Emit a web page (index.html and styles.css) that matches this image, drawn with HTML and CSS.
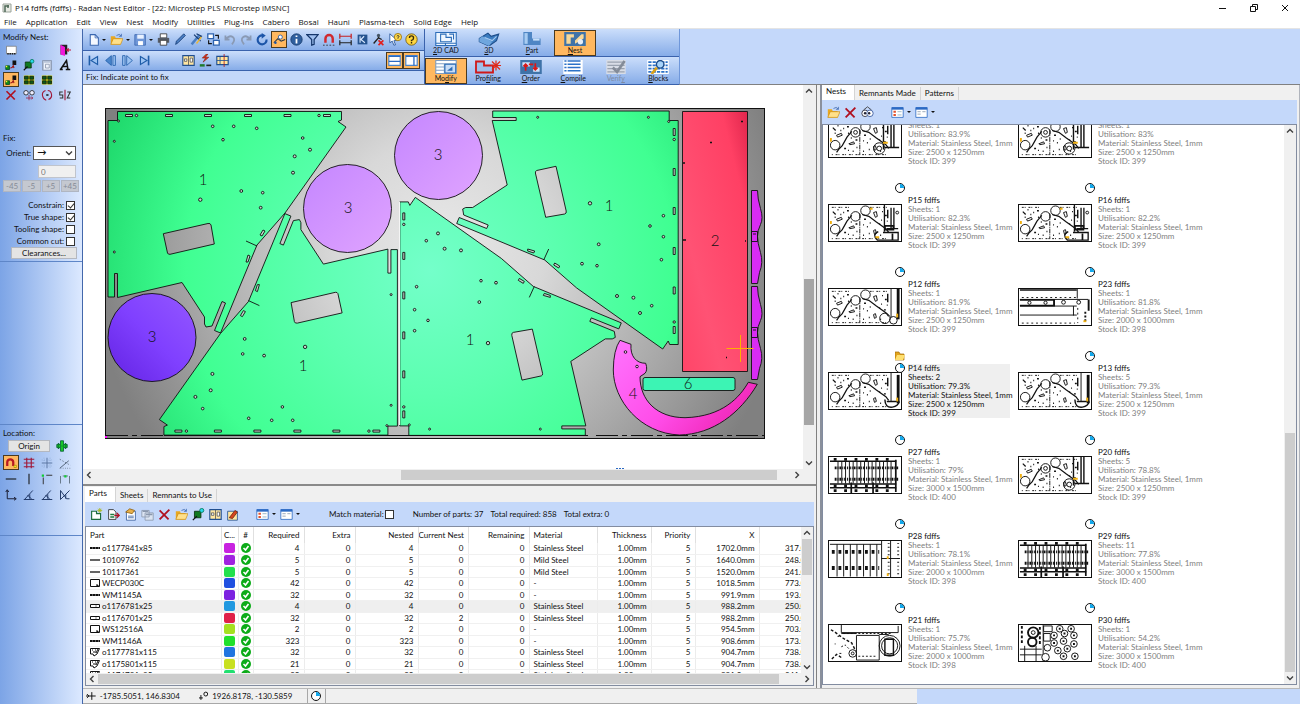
FILE: index.html
```html
<!DOCTYPE html>
<html lang="en">
  <head>
    <meta charset="UTF-8" />
    <meta name="viewport" content="width=device-width, initial-scale=1.0" />
    <title>P14 fdffs (fdffs) - Radan Nest Editor</title>
    <link rel="stylesheet" href="styles.css">
  </head>
  <body>

    <!-- icon set -->
    <svg class="defs" aria-hidden="true">
      <symbol id="new" viewBox="0 0 16 16"><path d="M4 2h6l4 4v9H4z" fill="#f4f8ff" stroke="#3b68b0" stroke-width="1.3"/><path d="M10 2v4h4" fill="none" stroke="#3b68b0"/></symbol>
      <symbol id="open" viewBox="0 0 16 16"><path d="M1 14V4h5l1 2h6v8z" fill="#e9a820"/><path d="M1 14l3-7h12l-3 7z" fill="#ffe08a" stroke="#c98a10" stroke-width=".8"/><path d="M8 3q4-3 6 1M14 1v3h-3" fill="none" stroke="#3b68b0"/></symbol>
      <symbol id="save" viewBox="0 0 16 16"><path d="M1 2h13v13H1z" fill="#6f97d8" stroke="#3b68b0"/><path d="M4 2h8v5H4z" fill="#e8f1ff"/><path d="M5 10h6v5H5z" fill="#fff"/></symbol>
      <symbol id="print" viewBox="0 0 16 16"><path d="M4 1h8v5H4z" fill="#fff" stroke="#333"/><path d="M1 6h14v6H1z" fill="#555c68"/><path d="M4 9h8v6H4z" fill="#fff" stroke="#333"/></symbol>
      <symbol id="pen" viewBox="0 0 16 16"><path d="M2 14l1-4 9-9 2 2-9 9z" fill="#4b7fc4" stroke="#143a72"/></symbol>
      <symbol id="tools" viewBox="0 0 16 16"><path d="M2 14l9-11" stroke="#4b7fc4" stroke-width="3"/><path d="M5 2l8 8M8 1l6 3-3 3" fill="none" stroke="#143a72" stroke-width="1.5"/><path d="M8 13l6-8" stroke="#e8b840" stroke-width="2"/></symbol>
      <symbol id="swap" viewBox="0 0 16 16"><path d="M1 1h7v6H1zM8 9h7v6H8z" fill="#fff" stroke="#2b61ae" stroke-width="1.6"/><path d="M10 3h4v4M6 13H2V9" fill="none" stroke="#111" stroke-width="1.4"/></symbol>
      <symbol id="undo" viewBox="0 0 16 16"><path d="M3 3v5h5M3 8q5-6 9-3t-1 9" fill="none" stroke="#8a9ab4" stroke-width="2.2"/></symbol>
      <symbol id="redo" viewBox="0 0 16 16"><path d="M13 3v5H8M13 8Q8 2 4 5t1 9" fill="none" stroke="#8a9ab4" stroke-width="2.2"/></symbol>
      <symbol id="refresh" viewBox="0 0 16 16"><path d="M13 8a5.500 5.500 0 1 1-5-5" fill="none" stroke="#1c55a8" stroke-width="2.600"/><path d="M7 0l5 3-5 4z" fill="#1c55a8"/></symbol>
      <symbol id="snapline" viewBox="0 0 16 16"><path d="M1 12l5-5 4 3 5-2" fill="none" stroke="#234" stroke-width="1.3"/><circle cx="9" cy="5" r="2.500" fill="#fff" stroke="#1c55a8"/><circle cx="3" cy="12" r="1.500" fill="#1c55a8"/></symbol>
      <symbol id="info" viewBox="0 0 16 16"><circle cx="8" cy="8" r="7" fill="#2f5f9e" stroke="#163a6c"/><path d="M8 3v2M8 7v6" stroke="#fff" stroke-width="2.200"/></symbol>
      <symbol id="filter" viewBox="0 0 16 16"><path d="M1 2h14L10 8v6l-3 1V8z" fill="#9fc0f0" stroke="#15376c" stroke-width="1.500"/></symbol>
      <symbol id="magnet" viewBox="0 0 16 16"><path d="M3 12V7a4.500 4.500 0 0 1 9 0v5" fill="none" stroke="#d02a30" stroke-width="3"/><path d="M0 15h16" stroke="#222" stroke-dasharray="2 2"/></symbol>
      <symbol id="dims" viewBox="0 0 16 16"><path d="M1 1v6M15 1v6M1 4h14" stroke="#c52020" stroke-width="1.500"/><path d="M1 9v6M15 9v6M1 12h14" stroke="#222" stroke-width="1.500"/></symbol>
      <symbol id="keyr" viewBox="0 0 16 16"><path d="M2 2h12v12H2z" fill="#24538f"/><path d="M5 4v8M10 4L6 8l5 4" fill="none" stroke="#d8e8ff" stroke-width="1.400"/></symbol>
      <symbol id="toolx" viewBox="0 0 16 16"><path d="M2 13l6-7 4 2M8 6V2" fill="none" stroke="#222" stroke-width="1.700"/><circle cx="8" cy="3" r="2" fill="#456"/><path d="M8 9l6 6M14 9l-6 6" stroke="#e02020" stroke-width="2"/></symbol>
      <symbol id="whats" viewBox="0 0 16 16"><path d="M1 1l9 8-4 .5 2 5-2 .5-2-5-3 2z" fill="#fff" stroke="#1c4c96"/><circle cx="11" cy="5" r="4.500" fill="#ffd84a" stroke="#96700c"/><path d="M9.500 4q1.500-2 3 0L11 6v1" fill="none" stroke="#222"/></symbol>
      <symbol id="help" viewBox="0 0 16 16"><circle cx="8" cy="8" r="7" fill="#ffd740" stroke="#6d5410"/><path d="M5.500 6q0-2.500 2.500-2.500T10.500 6 8 9v1M8 11v2" fill="none" stroke="#33280a" stroke-width="1.700"/></symbol>
      <symbol id="first" viewBox="0 0 16 16"><path d="M3 2v12" stroke="#1f5da8" stroke-width="2"/><path d="M13 3v10L5 8z" fill="#9cc3f2" stroke="#1f5da8" stroke-width="1.400"/></symbol>
      <symbol id="prev" viewBox="0 0 16 16"><path d="M9 2v12L2 8z" fill="#4a86cc" stroke="#1f5da8"/><path d="M11 2h3v12h-3z" fill="#9cc3f2" stroke="#1f5da8"/></symbol>
      <symbol id="next" viewBox="0 0 16 16"><path d="M7 2v12l7-6z" fill="#9cc3f2" stroke="#1f5da8"/><path d="M2 2h3v12H2z" fill="#9cc3f2" stroke="#1f5da8"/></symbol>
      <symbol id="last" viewBox="0 0 16 16"><path d="M13 2v12" stroke="#1f5da8" stroke-width="2"/><path d="M3 3v10l8-5z" fill="#9cc3f2" stroke="#1f5da8" stroke-width="1.400"/></symbol>
      <symbol id="sheet" viewBox="0 0 16 16"><path d="M1 2h14v12H1z" fill="#ffe6a0" stroke="#1f4f92" stroke-width="1.400"/><path d="M8 2v12M3 6h3v3H3zM10 5h3v5h-3z" fill="#fff" stroke="#555"/></symbol>
      <symbol id="flash" viewBox="0 0 16 16"><path d="M9 0L4 5h4L5 10l7-6H8l3-4z" fill="#e03018" stroke="#7a1c10" stroke-width=".7"/><path d="M1 14h6" stroke="#1f7a2c" stroke-width="3"/><path d="M9 14h6" stroke="#222" stroke-width="2"/></symbol>
      <symbol id="sheetp" viewBox="0 0 16 16"><path d="M1 3h14v10H1z" fill="#ffe6a0" stroke="#1f4f92" stroke-width="1.400"/><path d="M10 0v16" stroke="#b01818"/><path d="M5 3v10M1 8h14" stroke="#1f4f92"/></symbol>
      <symbol id="splith" viewBox="0 0 16 16"><path d="M1 2h14v12H1z" fill="#fff" stroke="#4a86cc" stroke-width="1.400"/><path d="M1 3h14M1 9h14" stroke="#2b6ac4" stroke-width="1.600"/></symbol>
      <symbol id="splitv" viewBox="0 0 16 16"><path d="M1 2h14v12H1z" fill="#fff" stroke="#4a86cc" stroke-width="1.400"/><path d="M1 3h14M11 3v11" stroke="#2b6ac4" stroke-width="1.600"/></symbol>
      <symbol id="del" viewBox="0 0 16 16"><path d="M2 3l11 11M14 2L2 14" stroke="#b01020" stroke-width="2.200"/></symbol>
      <symbol id="binoc" viewBox="0 0 16 16"><path d="M3 5l5-4 5 4" fill="none" stroke="#333"/><circle cx="5" cy="9" r="4" fill="#fff" stroke="#223"/><circle cx="11" cy="9" r="4" fill="#fff" stroke="#2b4f98"/><circle cx="5" cy="9" r="1.500" fill="#223"/><circle cx="10" cy="9" r="1.500" fill="#223"/></symbol>
      <symbol id="viewa" viewBox="0 0 16 16"><path d="M1 2h14v12H1z" fill="#fff" stroke="#2b6ac4"/><path d="M1 3h14" stroke="#2b6ac4" stroke-width="3"/><path d="M3 7h3M3 11h3" stroke="#e2502c" stroke-width="2.500"/><path d="M8 7h5M8 11h5" stroke="#8ab"/></symbol>
      <symbol id="viewb" viewBox="0 0 16 16"><path d="M1 2h14v12H1z" fill="#fff" stroke="#2b6ac4"/><path d="M1 3h14" stroke="#2b6ac4" stroke-width="3"/><path d="M3 7h4M3 10h4M9 7h4" stroke="#89a"/></symbol>
      <symbol id="addpart" viewBox="0 0 16 16"><path d="M2 4h6v3h5v7H2z" fill="#fff" stroke="#1d6b3c" stroke-width="1.400"/><path d="M12 0v6M9 3h6M10 1l4 4M14 1l-4 4" stroke="#a8b818"/></symbol>
      <symbol id="import" viewBox="0 0 16 16"><path d="M2 2h6l3 3v9H2z" fill="#fff" stroke="#222"/><path d="M4 8h5M4 11h5" stroke="#1d7a3c" stroke-width="2"/><path d="M9 9h6M12 6l3 3-3 3" fill="none" stroke="#b01020" stroke-width="1.600"/></symbol>
      <symbol id="props" viewBox="0 0 16 16"><path d="M3 4h11v11H3z" fill="#fff" stroke="#345d9e"/><path d="M2 5l5-4 6 2-3 4z" fill="#e8b048" stroke="#8d6012"/><path d="M5 10h7M5 12h7" stroke="#345d9e"/></symbol>
      <symbol id="copy" viewBox="0 0 16 16"><path d="M1 3h9v8H1zM5 6h10v9H5z" fill="#dbe4f2" stroke="#8a97ad"/><path d="M2 4h7M6 8h8" stroke="#8a97ad" stroke-width="2"/></symbol>
      <symbol id="pin" viewBox="0 0 16 16"><path d="M3 4h8v8H3z" fill="#117a20" stroke="#052e0a"/><path d="M1 15l5-5" stroke="#111" stroke-width="1.500"/><circle cx="12" cy="3" r="2.500" fill="#27d8e8" stroke="#075"/></symbol>
      <symbol id="sheetx" viewBox="0 0 16 16"><path d="M2 4h12v11H2z" fill="#ffe6a0" stroke="#1f4f92"/><path d="M4 12l7-9 3 2-6 8z" fill="#d6451c" stroke="#6a2410"/></symbol>

      <symbol id="win" viewBox="0 0 16 16"><path d="M2 3h13v10H2z" fill="#fff" stroke="#777"/><path d="M3 13h12" stroke="#222" stroke-width="2" stroke-dasharray="2 1"/></symbol>
      <symbol id="door" viewBox="0 0 16 16"><path d="M2 1h9v13H2z" fill="#222"/><path d="M2 1l6 3v12l-6-2z" fill="#f018d8"/><path d="M16 8h-5M13 6l-3 2 3 2" stroke="#c01838" fill="none" stroke-width="1.500"/></symbol>
      <symbol id="move" viewBox="0 0 16 16"><path d="M1 9h5v5H1z" fill="#0c8a18" stroke="#042"/><path d="M10 2h5v6h-5z" fill="#111"/><path d="M7 12q3 0 4-3l1 3" stroke="#a01818" stroke-width="1.500" fill="none"/><path d="M1 9h2v2H1z" fill="#ff3"/></symbol>
      <symbol id="clip" viewBox="0 0 16 16"><path d="M2 2h12v13H2z" fill="#b8c4d8" stroke="#8490a8"/><path d="M4 5h8v9H4z" fill="#eef2fa"/><path d="M6 7h5v5H6z" fill="none" stroke="#8490a8"/></symbol>
      <symbol id="text" viewBox="0 0 16 16"><path d="M2 14l8-12 2 12M5 10h6M1 14h4M9 14h6" stroke="#111" stroke-width="2" fill="none"/></symbol>
      <symbol id="pair" viewBox="0 0 16 16"><path d="M1 2h14v12H1z" fill="#d8e818"/><path d="M2 3h5v4H2zM9 3h5v4H9zM2 9h5v4H2zM9 9h5v4H9z" fill="#0a5a18" stroke="#111"/></symbol>
      <symbol id="mirror" viewBox="0 0 16 16"><circle cx="4" cy="5" r="3" fill="#eef" stroke="#111"/><circle cx="12" cy="5" r="3" fill="#eef" stroke="#111"/><path d="M4 12h9M8 8v7M11 10l2 2-2 2" stroke="#a01838" fill="none"/></symbol>
      <symbol id="rot" viewBox="0 0 16 16"><path d="M6 2q-5 2-4 7t5 6M10 14q5-2 4-7T9 2" fill="none" stroke="#a01838" stroke-width="1.500"/><path d="M7 8h3" stroke="#111" stroke-width="2"/></symbol>
      <symbol id="sz" viewBox="0 0 16 16"><path d="M5 4H1v4h4v4H1M11 4h4l-4 8h4" fill="none" stroke="#333" stroke-width="1.400"/><path d="M8 1v14" stroke="#a01838" stroke-width="1.500"/></symbol>

      <symbol id="target" viewBox="0 0 16 16"><path d="M6 1h4v5h5v4h-5v5H6v-5H1V6h5z" fill="#18c828" stroke="#053"/><path d="M3 4l4 4-4 4zM13 4L9 8l4 4z" fill="#18c828" stroke="#053"/></symbol>
      <symbol id="snapm" viewBox="0 0 16 16"><path d="M3 12V7a3.500 3.500 0 0 1 8 0v5" fill="none" stroke="#b81820" stroke-width="3"/><path d="M12 11h3v3h-3z" fill="#ff3" stroke="#a80"/></symbol>
      <symbol id="grid" viewBox="0 0 16 16"><path d="M5 1v14M11 1v14M1 3h14M1 8h14M1 13h14" stroke="#a01838" stroke-width="1.500"/></symbol>
      <symbol id="cross" viewBox="0 0 16 16"><path d="M8 1v14M1 8h14" stroke="#56709c" stroke-width="1.200"/><path d="M1 4h14M1 12h14M4 1v14M12 1v14" stroke="#7f9cca" stroke-dasharray="1 2"/></symbol>
      <symbol id="diag" viewBox="0 0 16 16"><path d="M1 3l14 8" stroke="#567" stroke-dasharray="2 2"/><path d="M1 15L13 5" stroke="#345"/><path d="M2 15h13" stroke="#567" stroke-dasharray="1 2"/></symbol>
      <symbol id="hline" viewBox="0 0 16 16"><path d="M1 8h14" stroke="#111" stroke-width="1.400"/></symbol>
      <symbol id="vline" viewBox="0 0 16 16"><path d="M8 1v14" stroke="#111" stroke-width="1.400"/></symbol>
      <symbol id="corner" viewBox="0 0 16 16"><path d="M3 6v9M7 3h8" stroke="#333" stroke-width="1.300"/><path d="M1 2h3v3H1z" fill="#1c3"/></symbol>
      <symbol id="mid" viewBox="0 0 16 16"><path d="M2 4v10M14 4v10M5 4h7" stroke="#678" stroke-width="1.300"/><path d="M7 3h3v3H7z" fill="#1c3"/></symbol>
      <symbol id="axis" viewBox="0 0 16 16"><path d="M3 2v11h11M1 4l2-3 2 3M12 11l3 2-3 2" fill="none" stroke="#112" stroke-width="1.200"/></symbol>
      <symbol id="ang" viewBox="0 0 16 16"><path d="M2 14L13 2M1 14h14M6 8l6 6M9 7v6" fill="none" stroke="#223a68" stroke-width="1.300"/></symbol>
      <symbol id="angl" viewBox="0 0 16 16"><path d="M2 2v12L14 2M2 2l8 11h4M9 7v6" fill="none" stroke="#223a68" stroke-width="1.300"/></symbol>

      <!-- mode buttons, 20 x 13 -->
      <symbol id="m-cad" viewBox="0 0 20 13"><path d="M0 0h20v13H0z" fill="#2c6db8"/><path d="M1 1h18v9H1zM1 11h8v1H1zM10 11h9v1h-9z" fill="#eef6ff"/><path d="M5 2h5v3h5v4H5zM13 2h4v5" fill="none" stroke="#2c6db8"/></symbol>
      <symbol id="m-3d" viewBox="0 0 20 13"><path d="M1 6l8-5 3 3 7-2-2 6-7 5-9-4z" fill="#3b7cc0" stroke="#1d4d8a"/><path d="M1 6l3-2 9 5-3 4-9-4z" fill="#6fa6de"/><path d="M6 5l7 3 4-4" fill="none" stroke="#a8ccf2"/></symbol>
      <symbol id="m-part" viewBox="0 0 20 13"><path d="M2 0h8v6h8v6H2z" fill="#4f86c4"/><path d="M3 1h3v10H3z" fill="#a8ccf2"/><path d="M11 7h6" stroke="#c8e0fa" stroke-width="2"/></symbol>
      <symbol id="m-nest" viewBox="0 0 20 13"><path d="M0 0h20v13H0z" fill="#3f73a8"/><path d="M2 2h7v3H6v6H2zM10 11V8l6-6h2v4z" fill="#f6d89a"/><circle cx="15" cy="9" r="2.500" fill="#e8eef8"/></symbol>
      <symbol id="m-mod" viewBox="0 0 20 13"><path d="M0 0h20v13H0z" fill="#7f9ec4"/><path d="M1 1h18v2H1zM1 4h7v2H1zM1 7h7v2H1zM1 10h7v2H1z" fill="#fff"/><path d="M9 4h10v8H9z" fill="#c9ddf6" stroke="#2c6db8"/><path d="M11 10l5-4v4" fill="#2c6db8"/></symbol>
      <symbol id="m-prof" viewBox="0 0 26 13"><path d="M1 1h8v4h9v7H1z" fill="#9fc0ea" stroke="#d01818" stroke-width="1.800"/><path d="M21 0v10M16 5h10M17 1l8 8M25 1l-8 8" stroke="#e02818" stroke-width="1.200"/></symbol>
      <symbol id="m-order" viewBox="0 0 20 13"><path d="M0 0h20v13H0z" fill="#3f73a8"/><path d="M2 2h7v4H2zM12 7h6v4h-6z" fill="#cfe2fa"/><path d="M5 10V4M3 6l2-2 2 2M14 3v6M12 7l2 2 2-2M8 4h4" fill="none" stroke="#d81818" stroke-width="1.600"/></symbol>
      <symbol id="m-list" viewBox="0 0 20 13"><path d="M1 0h18v13H1z" fill="#fff"/><path d="M2 1h2M2 4h2M2 7h2M2 10h2M5 1h12M5 4h12M5 7h12M5 10h12" stroke="#2c72c8" stroke-width="1.400"/></symbol>
      <symbol id="m-ver" viewBox="0 0 20 13"><path d="M1 0h18v13H1z" fill="#d8dde6"/><path d="M2 2h16M2 5h16M2 8h16M2 11h16" stroke="#9aa3b0"/><path d="M7 7l4 4 7-10" fill="none" stroke="#848c98" stroke-width="2.500"/></symbol>
      <symbol id="m-blk" viewBox="0 0 20 13"><path d="M0 0h20v13H0z" fill="#fff"/><path d="M1 2h18M1 5h18M1 8h18M1 11h18" stroke="#2c72c8" stroke-width="1.600" stroke-dasharray="3 1"/><path d="M9 7l-5 6" stroke="#d8a018" stroke-width="2.500"/><circle cx="12" cy="4" r="3.500" fill="#a8d4fa" stroke="#1d4d8a" stroke-width="1.300"/></symbol>

      <symbol id="pie" viewBox="0 0 10 10"><circle cx="5" cy="5" r="4.500" fill="#fff" stroke="#111"/><path d="M5 5V1a4 4 0 0 1 4 4z" fill="#12a8ec"/></symbol>
      <symbol id="folder" viewBox="0 0 10 10"><path d="M0 9V1h4l1 2h4v6z" fill="#e2a41c" stroke="#a06c08" stroke-width=".7"/><path d="M0 9l2-5h8L8 9z" fill="#ffe070"/></symbol>
      <symbol id="up" viewBox="0 0 8 8"><path d="M1 5.500L4 2.500l3 3" fill="none" stroke="#404040" stroke-width="1.400"/></symbol>
      <symbol id="down" viewBox="0 0 8 8"><path d="M1 2.500L4 5.500l3-3" fill="none" stroke="#404040" stroke-width="1.400"/></symbol>
      <symbol id="left" viewBox="0 0 8 8"><path d="M5.500 1L2.500 4l3 3" fill="none" stroke="#404040" stroke-width="1.400"/></symbol>
      <symbol id="right" viewBox="0 0 8 8"><path d="M2.500 1L5.500 4l-3 3" fill="none" stroke="#404040" stroke-width="1.400"/></symbol>
      <symbol id="tick" viewBox="0 0 10 10"><circle cx="5" cy="5" r="5" fill="#0cab18"/><path d="M2.500 5l2 2 3-4" fill="none" stroke="#fff" stroke-width="1.600"/></symbol>

      <!-- part shapes in the list -->
      <symbol id="s-bar" viewBox="0 0 10 10"><path d="M0 4h10v2H0z" fill="#111"/><path d="M2 5h1M5 5h1M8 5h1" stroke="#aaa"/></symbol>
      <symbol id="s-thin" viewBox="0 0 10 10"><path d="M0 5h10" stroke="#111" stroke-width="1.300"/></symbol>
      <symbol id="s-box" viewBox="0 0 10 10"><path d="M.5 1.500h9v7h-9z" fill="#fff" stroke="#111"/><path d="M6 7h2v1" stroke="#111"/></symbol>
      <symbol id="s-strip" viewBox="0 0 10 10"><path d="M.5 3.500h9v3h-9z" fill="#fff" stroke="#111"/><path d="M5 5h2" stroke="#888"/></symbol>
      <symbol id="s-plate" viewBox="0 0 10 10"><path d="M.5 1.500h9L7 7l-3 2-1-2H.5z" fill="#fff" stroke="#111"/><path d="M2 3h1M5 3h1M3 5h3M6 6l2-4" stroke="#111"/></symbol>

      <!-- nest thumbnails, 74 x 38 -->
      <symbol id="t-base" viewBox="0 0 74 38">
        <g fill="none" stroke="#111">
          <path d="M2 2.500h20M42 2.500h20" stroke-dasharray="2 1 1 3"/><path d="M2 35.500h58" stroke-dasharray="1 3 2 1"/>
          <path d="M31.500 9v27" stroke-dasharray="5 1 1 1"/>
          <circle cx="5.500" cy="25.500" r="5"/><circle cx="27" cy="12" r="5"/><circle cx="37.500" cy="6" r="5"/>
          <path d="M10 29l3-3 5-9 5-6M34 10l7 2 8 6 10 7 3 4M3 7l3 3M7 33l3-4" stroke-width="1.300"/>
          <path d="M7 15l5-2 1 2-5 2zM20 24l5-2 1 2-5 1zM46 8l3-1 1 5-2 1zM46 27l2-1 1 4-2 1z"/>
          <path d="M8 5h1M14 8h1M18 6h2M11 10h1M19 13h1M5 13h1M36 15h2M35 21h1M39 23h1M42 19h1M55 7h1M58 11h2M54 16h1M60 17h1M41 30h1M35 32h1M53 32h1M28 28h1M19 31h1M15 29h2M24 32h1M57 22h2M52 20h1M27 20h2M22 18h1M61 5v9" stroke-width="1.500"/>
        </g>
      </symbol>
      <symbol id="t-a" viewBox="0 0 74 38"><use href="#t-base"/><g fill="none" stroke="#111"><circle cx="52" cy="29" r="6"/><circle cx="52" cy="29" r="2.500"/><circle cx="27" cy="12" r="2"/><path d="M56.500 0v30M64.500 0v28M67.500 0v28M58 28h15" stroke-width="1.500"/><path d="M56 23h5M1 18v4" stroke="#f0b010" stroke-width="2"/></g></symbol>
      <symbol id="t-b" viewBox="0 0 74 38"><use href="#t-base"/><g fill="none" stroke="#111"><path d="M57.500 0v28M64.500 3v22M67.500 3v22M60 25h12M56 29h16v8H50q-6-6 1-9" stroke-width="1.400"/><path d="M58 22h9v4h-9zM66 30v7" stroke-width="1.800"/><circle cx="71" cy="8" r="1.500"/><path d="M1 17v3M48 34h4M42 4h3" stroke="#f0b010" stroke-width="2"/></g></symbol>
      <symbol id="t-c" viewBox="0 0 74 38"><use href="#t-base"/><g fill="none" stroke="#111"><path d="M64.500 0v30"/><path d="M72 0v32" stroke-width="3"/><circle cx="58" cy="31" r="5.500"/><circle cx="67" cy="33" r="4"/><path d="M71 26v4" stroke="#f0b010" stroke-width="2"/></g></symbol>
      <symbol id="t-d" viewBox="0 0 74 38"><use href="#t-base"/><g fill="none" stroke="#111"><path d="M64.500 0v30"/><path d="M72 2v30" stroke-width="3"/><path d="M58 28q0 9 8 8 6-1 7-6M60 30h11" stroke-width="1.500"/><path d="M71 26v4" stroke="#f0b010" stroke-width="2"/></g></symbol>
      <symbol id="t-bars" viewBox="0 0 74 38"><g fill="none" stroke="#111"><path d="M0 4.500h70" stroke-width="1.500"/><path d="M5 11.500h68M5 23.500h68" stroke-width="3" stroke-dasharray="2 1 1 1"/><path d="M8 16.500h60" stroke-width="23" stroke-dasharray="1 3"/><path d="M0 28.500h70M0 32.500h70" stroke-width="1.500"/><path d="M4 30.500h66M4 35.500h66M4 2.500h66" stroke-width="3" stroke-dasharray="3 8"/><path d="M69.500 3v34M22.500 27v11M45.500 27v11" stroke-width="1.800"/></g></symbol>
      <symbol id="t-cols" viewBox="0 0 74 38"><g fill="none" stroke="#111"><path d="M0 3.500h54M54.500 0v38M64 0v38M54 18.500h20"/><path d="M7 20.500h48" stroke-width="34" stroke-dasharray="1 6"/><path d="M2 11.500h50M2 28.500h50" stroke-width="4" stroke-dasharray="3 4"/><path d="M62 2v34M72 2v34" stroke-width="2" stroke-dasharray="1 3"/><path d="M61 16v3M61 34v3" stroke="#f0b010" stroke-width="2"/></g></symbol>
      <symbol id="t-rails" viewBox="0 0 74 38"><g fill="none" stroke="#111"><path d="M0 1h60" stroke-width="1.500"/><path d="M0 11h72M0 18h60M0 27.500h60M60.500 0v10M56.500 18v10"/><path d="M2 9h60M2 36h56M61 20v16" stroke-dasharray="2 3"/><path d="M0 11.500h36v6H0M72.500 11v12" stroke-width="2"/><circle cx="10" cy="14.500" r="1.700"/><circle cx="27" cy="14.500" r="1.700"/><circle cx="46" cy="14" r="2"/><circle cx="62" cy="14" r="2"/><path d="M69 24v12" stroke-width="2" stroke-dasharray="2 2"/><path d="M67 34h3" stroke="#f0b010" stroke-width="2"/></g></symbol>
      <symbol id="t-big" viewBox="0 0 74 38"><g fill="none" stroke="#111"><path d="M12 0v8h60V1M28 11h24v26H28zM12 9h16M52 10h10" /><path d="M1 5l5 3 8 6 9 5 4 8M2 36l5-5 6 4" stroke-dasharray="3 2" stroke-width="1.500"/><circle cx="63" cy="22" r="11"/><circle cx="63" cy="22" r="8.500"/><path d="M58 15h9v17h-9z" stroke-width="1.500"/><circle cx="24" cy="30" r="4"/><circle cx="24" cy="30" r="1.500"/><path d="M12 23l4-2 4 4M8 12h2M5 20h1M10 30h2M14 9h50M30 33h20" stroke-dasharray="2 2"/></g></symbol>
      <symbol id="t-discs" viewBox="0 0 74 38"><g fill="none" stroke="#111"><path d="M0 25.500h23M0 31.500h23M24.500 0v38M5 22v16M17 22v16"/><circle cx="14" cy="8" r="5.500" stroke-width="2"/><circle cx="13" cy="18" r="4.500" stroke-width="2"/><circle cx="14" cy="8" r="2"/><path d="M2 1v20M21 2v20" stroke-width="2" stroke-dasharray="3 2"/><path d="M25 1h9v6h-9zM25 9h7v8h-7z"/></g><g fill="#fff" stroke="#111"><circle cx="42" cy="4" r="3.500"/><circle cx="54" cy="4" r="3.500"/><circle cx="36" cy="11" r="3.500"/><circle cx="47" cy="9" r="3.500"/><circle cx="57" cy="11" r="3.500"/><circle cx="36" cy="19" r="3.500"/><circle cx="46" cy="17" r="3.500"/><circle cx="57" cy="20" r="3.500"/><circle cx="40" cy="27" r="3.500"/><circle cx="50" cy="25" r="3.500"/><circle cx="29" cy="24" r="3.500"/><circle cx="27" cy="34" r="4"/><circle cx="46" cy="33" r="3.500"/><circle cx="58" cy="33" r="3.500"/></g><path d="M41 4h2M53 4h2M35 11h2M46 9h2M56 11h2M35 19h2M45 17h2M56 20h2M39 27h2M49 25h2M45 33h2M57 33h2" stroke="#111" stroke-width="2"/></symbol>
    </svg>

    <header class="titlebar">
      <svg class="logo" viewBox="0 0 10 10"><path d="M1 1h8v8H1z" fill="#e8ebe4" stroke="#9aa39a"/><path d="M3 9V3h4M6 2v3" fill="none" stroke="#4f6a58" stroke-width="1.500"/></svg>
      <span>P14 fdffs (fdffs) - Radan Nest Editor - [22: Microstep PLS Microstep iMSNC]</span>
      <div class="winbtns">
        <button aria-label="Minimise"><svg viewBox="0 0 8 8"><path d="M0 4.500h7" stroke="#111"/></svg></button>
        <button aria-label="Restore"><svg viewBox="0 0 8 8"><path d="M.5 2.500h5v5h-5zM2.500 2V.5h5v5H6" fill="none" stroke="#111"/></svg></button>
        <button aria-label="Close"><svg viewBox="0 0 8 8"><path d="M1 1l6 6M7 1L1 7" stroke="#111"/></svg></button>
      </div>
    </header>

    <nav class="menu">
      <a href="#">File</a><a href="#">Application</a><a href="#">Edit</a><a href="#">View</a><a href="#">Nest</a><a href="#">Modify</a><a href="#">Utilities</a><a href="#">Plug-Ins</a><a href="#">Cabero</a><a href="#">Bosal</a><a href="#">Hauni</a><a href="#">Plasma-tech</a><a href="#">Solid Edge</a><a href="#">Help</a>
    </nav>

    <div class="shell">
      <aside class="sidebar">
        <section class="modify">
          <h2>Modify Nest:</h2>
          <div class="palette" data-icons="win,,,door,move,pin,clip,text,move*,pair,pair,,del,mirror,rot,sz"></div>
        </section>
        <section class="fix">
          <h2>Fix:</h2>
          <div class="row">
            <label for="orient">Orient:</label>
            <span class="drop"><select id="orient"><option>&#8594;</option></select><svg><use href="#down"/></svg></span>
          </div>
          <input class="angle" type="text" value="0" aria-label="Angle">
          <div class="steps"><button disabled>-45</button><button disabled>-5</button><button disabled>+5</button><button disabled>+45</button></div>
          <div class="checks">
            <label>Constrain:<input type="checkbox" checked></label>
            <label>True shape:<input type="checkbox" checked></label>
            <label>Tooling shape:<input type="checkbox"></label>
            <label>Common cut:<input type="checkbox"></label>
          </div>
          <button class="wide">Clearances...</button>
        </section>
        <div class="fill"></div>
        <section class="location">
          <h2>Location:</h2>
          <div class="origin"><button>Origin</button><svg><use href="#target"/></svg></div>
          <div class="palette" data-icons="snapm*,grid,cross,diag,hline,vline,corner,mid,axis,ang,ang,angl"></div>
        </section>
        <div class="fill"></div>
      </aside>

      <div class="work">
        <div class="toolbars">
          <div class="tools">
            <div class="bar main" data-tools="new+,open+,save+,print,pen,tools,swap,undo,redo,refresh,snapline*,info,filter,magnet,dims,keyr,toolx,whats,help"></div>
            <div class="bar second">
              <div class="group" data-tools="first,prev,next,last"></div>
              <div class="group" data-tools="sheet,flash,sheetp"></div>
              <div class="group end" data-tools="splith*,splitv*"></div>
            </div>
            <div class="prompt">Fix: Indicate point to fix</div>
          </div>
          <div class="modes">
            <div class="moderow">
              <button><svg><use href="#m-cad"/></svg><span><u>2</u>D CAD</span></button>
              <button><svg><use href="#m-3d"/></svg><span><u>3</u>D</span></button>
              <button><svg><use href="#m-part"/></svg><span><u>P</u>art</span></button>
              <button class="on"><svg><use href="#m-nest"/></svg><span><u>N</u>est</span></button>
            </div>
            <div class="moderow">
              <button class="on"><svg><use href="#m-mod"/></svg><span>Mo<u>d</u>ify</span></button>
              <button><svg><use href="#m-prof"/></svg><span>Pro<u>f</u>iling</span></button>
              <button><svg><use href="#m-order"/></svg><span><u>O</u>rder</span></button>
              <button><svg><use href="#m-list"/></svg><span><u>C</u>ompile</span></button>
              <button disabled><svg><use href="#m-ver"/></svg><span>Verif<u>y</u></span></button>
              <button><svg><use href="#m-blk"/></svg><span><u>B</u>locks</span></button>
            </div>
          </div>
        </div>

        <div class="panes">
          <div class="leftpane">
            <div class="canvas">
              <div class="view">
                <svg viewBox="83 85 720 384">
                  <defs>
                    <radialGradient id="metal" gradientUnits="userSpaceOnUse" cx="440" cy="245" r="350"><stop offset="0" stop-color="#e8e8e8"/><stop offset=".3" stop-color="#d8d8d8"/><stop offset=".7" stop-color="#a8a8a8"/><stop offset="1" stop-color="#808080"/></radialGradient>
                    <radialGradient id="green" gradientUnits="userSpaceOnUse" cx="430" cy="270" r="350"><stop offset="0" stop-color="#74ffca"/><stop offset=".35" stop-color="#5cffb0"/><stop offset=".7" stop-color="#40ff92"/><stop offset="1" stop-color="#1fd96c"/></radialGradient>
                    <linearGradient id="red" x1="1" y1="0" x2="0" y2="1"><stop offset="0" stop-color="#e0264c"/><stop offset=".2" stop-color="#ff4064"/><stop offset=".7" stop-color="#ff5274"/><stop offset="1" stop-color="#ff4568"/></linearGradient>
                    <linearGradient id="violet" x1="0" y1="1" x2="1" y2="0"><stop offset="0" stop-color="#6222e2"/><stop offset=".5" stop-color="#8040ff"/><stop offset="1" stop-color="#9458ff"/></linearGradient>
                    <linearGradient id="lilac" x1="0" y1="0" x2="1" y2="1"><stop offset="0" stop-color="#c486ff"/><stop offset="1" stop-color="#e0a4ff"/></linearGradient>
                    <linearGradient id="pink" x1="0" y1="0" x2="1" y2=".6"><stop offset="0" stop-color="#ff74ff"/><stop offset=".6" stop-color="#ff4ce8"/><stop offset="1" stop-color="#f028b8"/></linearGradient>
                    <path id="plate" clip-rule="evenodd" d="M117.500 111.500H341.500V120L338 121.500 346 127 285 213 257 245 220.500 333 214.500 330.500 225.500 303 222 301.500 212 326 206 327 204.500 324V317L182 282.500 117.500 297.500V273.500H114.500V297H108V120.500H117.500ZM163.300 233.700L208 223.500Q210.500 223 211 225L214.300 244 170 254.300Q168 254.500 167.500 253Z"/>
                    <g id="holes">
                      <path d="M125.500 114.500h7v2h-7zM165.500 114.500h7v2h-7zM204.500 114.500h7v2h-7zM244.500 114.500h7v2h-7zM284 114.500h7v2h-7zM323.500 114.500h7v2h-7z"/>
                      <path d="M260 235l3-5 2 1-3 5zM246 262l2-7 2 1-2 6zM246 241l11 5"/>
                      <circle cx="136.500" cy="115.500" r="1.200"/><circle cx="319" cy="115.500" r="1.200"/><circle cx="118.500" cy="121" r="1"/>
                      <circle cx="212.700" cy="126.300" r="1.300"/><circle cx="233.700" cy="126.300" r="1.300"/><circle cx="256.700" cy="128.300" r="1.300"/><circle cx="223" cy="139.700" r="1.300"/><circle cx="302.700" cy="138" r="1.300"/><circle cx="310" cy="149.700" r="1.500"/><circle cx="294.700" cy="156.300" r="1.500"/><circle cx="293" cy="172.700" r="1.500"/><circle cx="241.300" cy="191" r="1.400"/><circle cx="262.700" cy="192.700" r="1.300"/><circle cx="260.700" cy="207.700" r="1.400"/><circle cx="200.300" cy="199.700" r="1.700"/><circle cx="114.300" cy="141.300" r="1"/><circle cx="114.300" cy="252" r="1"/>
                    </g>
                    <clipPath id="plates"><use href="#plate"/><use href="#plate" transform="rotate(180 252.700 273.300)"/><use href="#plate" transform="matrix(0 1 -1 0 789.700 3)"/><use href="#plate" transform="matrix(0 -1 1 0 288.300 543.400)"/></clipPath>
                  </defs>
                  <rect x="105.500" y="108.500" width="659" height="330" fill="url(#metal)" stroke="#111"/>
                  <rect x="105" y="108" width="660" height="330" fill="url(#green)" clip-path="url(#plates)"/>
                  <g fill="none" stroke="#111" stroke-width=".9">
                    <use href="#plate"/><use href="#plate" transform="rotate(180 252.700 273.300)"/><use href="#plate" transform="matrix(0 1 -1 0 789.700 3)"/><use href="#plate" transform="matrix(0 -1 1 0 288.300 543.400)"/>
                  </g>
                  <g fill="#c4d4cc" stroke="#111" stroke-width=".9">
                    <use href="#holes"/><use href="#holes" transform="rotate(180 252.700 273.300)"/><use href="#holes" transform="matrix(0 1 -1 0 789.700 3)"/><use href="#holes" transform="matrix(0 -1 1 0 288.300 543.400)"/>
                  </g>
                  <path d="M399.500 202v223" stroke="#f4f4f4"/>
                  <path d="M106 435.500h482M596 435.500h168" stroke="#111" stroke-dasharray="22 4 5 4"/>
                  <path d="M164 435.500h424" stroke="#111"/>
                  <g stroke="#111" stroke-width=".9">
                    <circle cx="152" cy="337.500" r="44" fill="url(#violet)"/>
                    <circle cx="347.500" cy="208.500" r="44" fill="url(#lilac)"/>
                    <circle cx="438.500" cy="155.500" r="44" fill="url(#lilac)"/>
                    <path d="M682.500 111.500h65v260h-65z" fill="url(#red)"/>
                    <path d="M645 377.500h88q2 0 2 2v9q0 2-2 2h-88q-2 0-2-2v-9q0-2 2-2z" fill="#3cf4b4"/>
                    <path id="slug" d="M751.500 190.500h6q0 8 3 18t0 16-3 12q0 6 3 16t-1 20l-2 11h-6z" fill="#d82cf4"/>
                    <use href="#slug" y="96"/>
                    <path d="M751.500 231.500h6v10h-6zM751.500 327.500h6v10h-6zM753 234h3M753 330h3" fill="none"/>
                    <path d="M620 340.300L631 344.300C630 356 636 363.300 645.700 363.300Q648 370 645 373.300L640 376.700C640 400 656.700 417.700 685 417.700C723 416.700 740 396.700 748.300 382.300L757.300 384.300C740 413.300 713.300 434.300 679.300 435C640 433.300 613.300 400 613.300 370Q613.500 350 620 340.300Z" fill="url(#pink)"/>
                    <circle cx="625.500" cy="352" r="1.300" fill="#fbf"/><circle cx="637" cy="366.500" r="1.300" fill="#fbf"/>
                    <path d="M710 142.500h2M741 121.500h2M683 163h2M683 240h3M745 241h1M726 357.500h1" stroke-width="1.500"/>
                  </g>
                  <g class="nums">
                    <text x="203" y="185">1</text><text x="303" y="371">1</text><text x="609" y="211">1</text><text x="470" y="345">1</text>
                    <text x="152" y="342">3</text><text x="348" y="213">3</text><text x="438" y="160">3</text>
                    <text x="715" y="246">2</text><text x="633" y="399">4</text><text x="688" y="389">6</text>
                  </g>
                  <path d="M726.500 348.500h27M740.500 335v27" stroke="#ffb000"/>
                  <path d="M105 436h2v2h-2z" fill="#f0f"/>
                  <path d="M616 468.500h8" stroke="#2b6ac4" stroke-dasharray="2 1"/>
                </svg>
              </div>
              <div class="vscroll c1"><svg><use href="#up"/></svg><i></i><b></b><i></i><svg><use href="#down"/></svg></div>
              <div class="hscroll c2"><svg><use href="#left"/></svg><i></i><b></b><i></i><svg><use href="#right"/></svg></div>
            </div>

            <div class="parts">
              <div class="tabs"><a href="#" class="on">Parts</a><a href="#">Sheets</a><a href="#">Remnants to Use</a></div>
              <div class="panelbar">
                <div class="group" data-tools="addpart,import,props,copy,del,open,pin,sheet,sheetx"></div>
                <div class="group views" data-tools="viewa+,viewb+"></div>
                <label class="match">Match material:<input type="checkbox"></label>
                <div class="totals"><span>Number of parts: 37</span><span>Total required: 858</span><span>Total extra: 0</span></div>
              </div>
              <div class="tablebox">
                <div class="tablewrap">
                  <table>
                    <thead><tr><th class="l c-part">Part</th><th class="c-col">C...</th><th class="c-num">#</th><th class="c-req">Required</th><th class="c-req">Extra</th><th class="c-nst">Nested</th><th class="c-cur">Current Nest</th><th class="c-rem">Remaining</th><th class="l c-mat">Material</th><th class="c-th">Thickness</th><th class="c-pri">Priority</th><th class="c-x">X</th><th class="c-x"></th></tr></thead>
                    <tbody id="rows"></tbody>
                  </table>
                </div>
                <div class="vscroll c3"><svg><use href="#up"/></svg><i></i><b></b><i></i><svg><use href="#down"/></svg></div>
                <div class="hscroll c4"><svg><use href="#left"/></svg><i></i><b></b><i></i><svg><use href="#right"/></svg></div>
              </div>
            </div>
          </div>

          <div class="rightpane">
            <div class="tabs"><a href="#" class="on">Nests</a><a href="#">Remnants Made</a><a href="#">Patterns</a></div>
            <div class="panelbar">
              <div class="group" data-tools="open,del,binoc"></div>
              <div class="group views" data-tools="viewa+,viewb+"></div>
            </div>
            <div class="nestbox">
              <div class="nestlist"><div class="nests" id="nests"></div></div>
              <div class="vscroll c5"><svg><use href="#up"/></svg><i></i><b></b><i></i><svg><use href="#down"/></svg></div>
            </div>
          </div>
        </div>

        <footer class="status">
          <div class="coords">
            <svg viewBox="0 0 10 10"><path d="M0 5h10M6 1v8M1 3l2 2-2 2" fill="none" stroke="#111"/></svg><span>-1785.5051, 146.8304</span>
            <svg viewBox="0 0 10 10"><circle cx="7" cy="3" r="2" fill="none" stroke="#111"/><path d="M2 4v5M0 7h4" stroke="#111"/></svg><span>1926.8178, -130.5859</span>
          </div>
          <div class="cell"><svg viewBox="0 0 10 10"><use href="#pie"/></svg></div>
          <div class="message"></div>
        </footer>
      </div>
    </div>

    <script src="app.js"></script>
  </body>
</html>
```
FILE: styles.css
```css
* {
    box-sizing: border-box;
}

body {
    margin: 0;
    height: 100vh;
    display: flex;
    flex-direction: column;
    overflow: hidden;
    background: #fff;
    color: #111;
    font-family: Lato, "Liberation Sans", Arial, sans-serif;
    font-size: 8px;
    line-height: 10px;
}

button, input, select {
    font: inherit;
    color: inherit;
    margin: 0;
    padding: 0;
}

button {
    border: none;
    background: none;
}

a {
    color: inherit;
    text-decoration: none;
}

h2 {
    margin: 0;
    font-size: inherit;
    font-weight: normal;
}

svg {
    display: block;
}

.defs {
    position: absolute;
    width: 0;
    height: 0;
}

/* title and menu */
.titlebar {
    display: flex;
    align-items: center;
    height: 15px;
    flex: none;
    gap: 3px;
    padding-left: 2px;
    font-family: "Open Sans", "Noto Sans", sans-serif;
}

.logo {
    width: 10px;
    height: 10px;
}

.winbtns {
    margin-left: auto;
    display: flex;
}

.winbtns button {
    width: 31px;
    display: flex;
    justify-content: center;
}

.winbtns svg {
    width: 8px;
    height: 8px;
}

.menu {
    display: flex;
    align-items: center;
    height: 14px;
    flex: none;
    gap: 9px;
    padding-left: 4px;
    border-bottom: 1px solid #e4e4e4;
    font-family: "Open Sans", "Noto Sans", sans-serif;
}

.shell {
    flex: 1;
    min-height: 0;
    display: flex;
}

/* left palette */
.sidebar {
    width: 83px;
    flex: none;
    display: flex;
    flex-direction: column;
    background: linear-gradient(90deg, #7ca4e6, #dce9ff);
    border-right: 1px solid #4368ac;
}

.sidebar section {
    padding: 3px 3px 0;
}

.palette {
    display: grid;
    grid-template-columns: repeat(4, 18px);
    grid-auto-rows: 15px;
}

.palette button {
    width: 16px;
    height: 15px;
    display: flex;
    align-items: center;
    justify-content: center;
    border: 1px solid transparent;
}

.palette svg, .origin svg {
    width: 12px;
    height: 12px;
}

.palette .on, .bar .on {
    background: #ffb860;
    border: 1px solid #4a3a20;
}

.sidebar .fix {
    margin-top: 28px;
    padding-bottom: 2px;
    border-bottom: 1px solid #5e86c8;
}

.row {
    display: flex;
    align-items: center;
    justify-content: flex-end;
    gap: 2px;
    margin-top: 3px;
    padding-right: 3px;
}

.drop {
    position: relative;
    width: 43px;
    height: 14px;
}

.drop select {
    appearance: none;
    width: 43px;
    height: 14px;
    padding-left: 3px;
    border: 1px solid #555;
    border-radius: 0;
    background: #fff;
    font-family: "DejaVu Sans", sans-serif;
    font-size: 11px;
    line-height: 10px;
}

.drop svg {
    position: absolute;
    right: 3px;
    top: 3px;
    width: 8px;
    height: 8px;
}

.angle {
    display: block;
    width: 38px;
    height: 13px;
    margin: 5px 3px 2px auto;
    padding-left: 2px;
    border: 1px solid #c0c4cc;
    background: #f0f0f0;
    color: #777;
}

.steps {
    display: flex;
    gap: 1px;
}

.steps button {
    flex: 1;
    height: 12px;
    background: #c4c8d0;
    border: 1px solid #b0b6c2;
    color: #868c98;
    line-height: 8px;
}

.checks {
    margin-top: 7px;
    padding-right: 4px;
}

.checks label {
    display: flex;
    align-items: center;
    justify-content: flex-end;
    gap: 2px;
    height: 12px;
}

input[type="checkbox"] {
    appearance: none;
    width: 9px;
    height: 9px;
    border: 1px solid #333;
    background: #fff;
}

input[type="checkbox"]:checked::after {
    content: "";
    display: block;
    width: 3px;
    height: 5px;
    margin-left: 2px;
    border: solid #333;
    border-width: 0 1px 1px 0;
    transform: rotate(40deg);
}

.wide, .origin button {
    background: #e4e4e4;
    border: 1px solid #b4b8c0;
    height: 12px;
    line-height: 8px;
}

.wide {
    display: block;
    width: 66px;
    margin: 0 2px 0 auto;
}

.fill {
    flex: 155;
}

.location + .fill {
    flex: 160;
}

.sidebar .location {
    padding-bottom: 32px;
    border-top: 1px solid #5e86c8;
    border-bottom: 1px solid #5e86c8;
}

.origin {
    display: flex;
    align-items: center;
    gap: 6px;
    margin: 2px 0 3px 5px;
}

.origin button {
    width: 42px;
}

.location .palette {
    grid-auto-rows: 16px;
}

/* toolbars */
.work {
    flex: 1;
    min-width: 0;
    display: flex;
    flex-direction: column;
}

.toolbars {
    display: flex;
    height: 56px;
    flex: none;
    background: #c4d8fa;
    border-bottom: 1px solid #808080;
}

.tools {
    width: 342px;
    border-right: 1px solid #3a62ac;
}

.bar {
    display: flex;
    align-items: center;
    height: 22px;
    padding: 0 4px 0 2px;
    background: linear-gradient(#cbdefb, #86ace8);
    border-bottom: 1px solid #3a62ac;
}

.main {
    justify-content: space-between;
}

.second {
    height: 20px;
}

.second .group {
    margin-right: 27px;
}

.second .end {
    margin: 0 0 0 auto;
}

.group {
    display: flex;
}

.tool {
    width: 17px;
    height: 17px;
    display: flex;
    align-items: center;
    justify-content: center;
    border: 1px solid transparent;
}

.tool svg {
    width: 13px;
    height: 13px;
    flex: none;
}

.main .tool {
    width: 16px;
}

.split {
    display: flex;
    align-items: center;
}

.split::after {
    content: "";
    border: 2px solid transparent;
    border-top-color: #111;
    border-bottom: none;
    margin: 0 2px 0 1px;
}

.prompt {
    padding: 1px 3px;
}

.modes {
    width: 255px;
    border-right: 1px solid #6f97da;
}

.moderow {
    display: flex;
    height: 28px;
    padding-top: 1px;
    gap: 1px;
    background: linear-gradient(#cbdefb, #86ace8);
    border-bottom: 1px solid #3a62ac;
}

.moderow button {
    width: 42px;
    height: 26px;
    display: flex;
    flex-direction: column;
    align-items: center;
    justify-content: space-between;
    padding-top: 1px;
    border: 1px solid transparent;
    font-size: 7px;
    line-height: 9px;
}

.moderow svg {
    width: 26px;
    height: 14px;
}

.moderow .on {
    background: #ffb860;
    border-color: #4a3a20;
}

.moderow button:disabled {
    color: #7d8aa2;
}

/* panes */
.panes {
    flex: 1;
    min-height: 0;
    display: grid;
    grid-template-columns: minmax(0, 734fr) minmax(0, 480fr);
    gap: 3px;
    background: #f0f0f0;
}

.leftpane, .rightpane {
    min-height: 0;
    display: flex;
    flex-direction: column;
}

.leftpane {
    border-right: 1px solid #808080;
}

.rightpane {
    border-left: 2px solid #8a909c;
    border-right: 1px solid #b0b4bc;
    padding-right: 2px;
    padding-bottom: 3px;
}

.canvas {
    flex: 1;
    min-height: 0;
    display: grid;
    grid-template-columns: 1fr 12px;
    grid-template-rows: 1fr 12px;
    border-bottom: 2px solid #8a8a8a;
    padding: 0 1px 3px 0;
}

.view {
    min-height: 0;
    background: #fff;
}

.view svg {
    width: 100%;
    height: 100%;
}

.nums {
    font-family: Lato, "Open Sans", sans-serif;
    font-size: 15px;
    font-weight: 300;
    text-anchor: middle;
    fill: #111;
}

.vscroll, .hscroll {
    display: flex;
    align-items: center;
    background: #f0f0f0;
}

.vscroll {
    flex-direction: column;
    width: 12px;
}

.hscroll {
    height: 12px;
}

.vscroll svg, .hscroll svg {
    width: 8px;
    height: 8px;
    margin: 2px;
    flex: none;
}

.vscroll b, .hscroll b {
    background: #cdcdcd;
}

.vscroll b {
    width: 10px;
}

.hscroll b {
    height: 10px;
}

.c1 i { flex: 182; }
.c1 b { flex: 147; background: #a6a6a6; }
.c1 b + i { flex: 32; }
.c2 i { flex: 306; }
.c2 b { flex: 376; }
.c2 b + i { flex: 14; }
.c3 i { flex: 0; }
.c3 b { flex: 37; }
.c3 b + i { flex: 87; }
.c4 i { flex: 0; }
.c4 b { flex: 671; }
.c4 b + i { flex: 22; }
.c5 i { flex: 296; }
.c5 b { flex: 239; }
.c5 b + i { flex: 0; }

.tabs {
    display: flex;
    align-items: flex-end;
    height: 15px;
    flex: none;
}

.tabs a {
    padding: 1px 4px;
    height: 13px;
    border-right: 1px solid #d4d4d4;
}

.tabs .on {
    height: 15px;
    padding: 1px 8px 1px 4px;
    background: #fff;
}

.panelbar {
    display: flex;
    align-items: center;
    height: 24px;
    flex: none;
    padding-left: 3px;
    background: #c4d8fa;
}

.views {
    margin-left: 13px;
}

.match {
    display: flex;
    align-items: center;
    gap: 1px;
    margin-left: 27px;
}

.totals {
    display: flex;
    gap: 7px;
    margin-left: 19px;
}

.parts {
    height: 202px;
    flex: none;
    display: flex;
    flex-direction: column;
    padding: 1px 2px 2px 2px;
}

.tablebox {
    flex: 1;
    min-height: 0;
    display: grid;
    grid-template-columns: minmax(0, 1fr) 12px;
    grid-template-rows: minmax(0, 1fr) 12px;
    background: #fff;
    border: 1px solid #828ca0;
}

.hscroll.c4 {
    grid-column: 1 / 3;
}

.tablewrap {
    overflow: hidden;
}

table {
    width: 735px;
    table-layout: fixed;
    border-collapse: collapse;
}

th, td {
    padding: 0 4px;
    height: 11px;
    text-align: right;
    font-weight: normal;
    line-height: 10px;
    white-space: nowrap;
    overflow: hidden;
    border-right: 1px solid #ececec;
}

th {
    height: 16px;
    border-right-color: #e0e0e0;
}

td {
    border-bottom: 1px solid #f0f0f0;
}

tbody tr:nth-child(even) td {
    height: 12px;
}

th.l, td.l {
    text-align: left;
}

.c-part { width: 135px; }
.c-col { width: 17px; padding: 0 2px; text-align: center; }
.c-num { width: 15px; padding: 0 2px; text-align: center; }
.c-req { width: 51px; }
.c-nst { width: 63px; }
.c-cur { width: 50px; padding-left: 0; }
.c-rem { width: 61px; }
.c-mat { width: 68px; }
.c-th { width: 54px; }
.c-pri { width: 44px; }
.c-x { width: 64px; }

.sel td {
    background: #efefef;
}

td svg {
    width: 10px;
    height: 10px;
}

.name {
    display: flex;
    align-items: center;
    gap: 2px;
}

.swatch, .mark {
    padding: 0 2px;
}

.swatch svg {
    width: 11px;
}

/* nest list */
.nestbox {
    flex: 1;
    min-height: 0;
    display: flex;
    background: #fff;
    border: 1px solid #828ca0;
}

.nestlist {
    flex: 1;
    min-width: 0;
    overflow: hidden;
}

.nests {
    display: grid;
    grid-template-columns: repeat(auto-fill, 190px);
    grid-auto-rows: 84px;
    margin-top: -29px;
    padding-left: 5px;
}

.nest {
    position: relative;
    display: flex;
    gap: 6px;
    padding-top: 16px;
}

.thumb {
    width: 74px;
    height: 38px;
    margin-top: 8px;
    border: 1px solid #111;
}

.nest dl {
    margin: 0;
    width: 102px;
    height: 54px;
    color: #808080;
    line-height: 9px;
    white-space: nowrap;
}

.nest dt {
    color: #111;
}

.nest dd {
    margin: 0;
}

.nest.sel dl {
    background: #efefef;
    color: #111;
}

.flags {
    position: absolute;
    left: 67px;
    top: 3px;
}

.flags svg {
    width: 10px;
    height: 10px;
    margin-bottom: 2px;
}

/* status */
.status {
    display: flex;
    height: 16px;
    flex: none;
    background: #c4d8fa;
    border-top: 1px solid #b8b8b8;
}

.coords, .cell, .message {
    display: flex;
    align-items: center;
    gap: 4px;
    padding-left: 3px;
    background: #f0f0f0;
    border-bottom: 1px solid #a8a8a8;
}

.coords {
    width: 225px;
    border-right: 1px solid #a8a8a8;
}

.coords span {
    width: 98px;
}

.cell {
    width: 18px;
    border-right: 1px solid #a8a8a8;
}

.message {
    width: 591px;
}

.status svg {
    width: 10px;
    height: 10px;
}
```
FILE: app.js
```js
const svg = (id) => `<svg><use href="#${id}"/></svg>`;

// toolbars: "name+" has a drop arrow, "name*" is pressed
document.querySelectorAll('[data-tools]').forEach((bar) => {
  bar.innerHTML = bar.dataset.tools.split(',').map((item) => {
    const id = item.replace(/[+*]/, '');
    const button = `<button class="tool${item.endsWith('*') ? ' on' : ''}" aria-label="${id}">${svg(id)}</button>`;
    return item.endsWith('+') ? `<span class="split">${button}</span>` : button;
  }).join('');
});

document.querySelectorAll('[data-icons]').forEach((box) => {
  box.innerHTML = box.dataset.icons.split(',').map((item) => {
    if (!item) return '<span></span>';
    const id = item.replace('*', '');
    return `<button class="${item.endsWith('*') ? 'on' : ''}" aria-label="${id}">${svg(id)}</button>`;
  }).join('');
});

// shape, name, colour, required, current nest, material, x, y
const parts = [
  ['s-bar', 'o1177841x85', '#c822e0', 4, 0, 'Stainless Steel', '1702.0mm', '317.0'],
  ['s-thin', '10109762', '#a022e0', 5, 0, 'Mild Steel', '1640.0mm', '248.0'],
  ['s-thin', '10117361', '#22e04c', 5, 0, 'Mild Steel', '1520.0mm', '241.0'],
  ['s-box', 'WECP030C', '#2050e0', 42, 0, '-', '1018.5mm', '773.0'],
  ['s-bar', 'WM1145A', '#7c22e0', 32, 0, '-', '991.9mm', '193.0'],
  ['s-strip', 'o1176781x25', '#2098e0', 4, 0, 'Stainless Steel', '988.2mm', '250.0'],
  ['s-strip', 'o1176701x25', '#e02048', 32, 2, 'Stainless Steel', '988.2mm', '250.0'],
  ['s-box', 'WS12516A', '#a4e020', 2, 0, '-', '954.5mm', '703.0'],
  ['s-bar', 'WM1146A', '#20e02c', 323, 0, '-', '908.6mm', '173.0'],
  ['s-plate', 'o1177781x115', '#2074e0', 32, 0, 'Stainless Steel', '904.7mm', '738.0'],
  ['s-plate', 'o1175801x115', '#c8e020', 21, 0, 'Stainless Steel', '904.7mm', '738.0'],
  ['s-plate', 'o1176701x85', '#20e070', 32, 0, 'Stainless Steel', '901.2mm', '341.0']
];

document.getElementById('rows').innerHTML = parts.map(([shape, name, colour, req, cur, mat, x, y], i) => `
  <tr${i === 5 ? ' class="sel"' : ''}>
    <td class="l"><span class="name">${svg(shape)}${name}</span></td>
    <td class="swatch"><svg viewBox="0 0 11 10"><rect width="11" height="10" rx="2" fill="${colour}"/></svg></td>
    <td class="mark">${svg('tick')}</td>
    <td>${req}</td><td>0</td><td>${req}</td><td>${cur}</td><td>0</td>
    <td class="l">${mat}</td><td>1.00mm</td><td>5</td><td>${x}</td><td>${y}mm</td>
  </tr>`).join('');

// thumbnail, name, sheets, utilisation, size, stock id
const nests = [
  ['t-a', 'P11', 1, '83.9', '2500 x 1250', 399], ['t-a', 'P17', 1, '83', '2500 x 1250', 399],
  ['t-b', 'P15', 1, '82.3', '2500 x 1250', 399], ['t-b', 'P16', 1, '82.2', '2500 x 1250', 399],
  ['t-c', 'P12', 1, '81.9', '2500 x 1250', 399], ['t-rails', 'P23', 1, '81.8', '2000 x 1000', 398],
  ['t-d', 'P14', 2, '79.3', '2500 x 1250', 399], ['t-d', 'P13', 5, '79.3', '2500 x 1250', 399],
  ['t-bars', 'P27', 1, '79', '3000 x 1500', 400], ['t-a', 'P20', 5, '78.8', '2500 x 1250', 399],
  ['t-cols', 'P28', 1, '78.1', '2000 x 1000', 398], ['t-bars', 'P29', 11, '77.8', '3000 x 1500', 400],
  ['t-big', 'P21', 1, '75.7', '2000 x 1000', 398], ['t-discs', 'P30', 1, '54.2', '3000 x 1500', 400]
];

document.getElementById('nests').innerHTML = nests.map(([thumb, name, sheets, util, size, stock]) => {
  const open = name === 'P14';
  return `
  <div class="nest${open ? ' sel' : ''}">
    <svg class="thumb"><use href="#${thumb}"/></svg>
    <dl><dt>${name} fdffs</dt><dd>Sheets: ${sheets}</dd><dd>Utilisation: ${util}%</dd><dd>Material: Stainless Steel, 1mm</dd><dd>Size: ${size}mm</dd><dd>Stock ID: ${stock}</dd></dl>
    <div class="flags">${open ? svg('folder') : ''}${svg('pie')}</div>
  </div>`;
}).join('');
```
